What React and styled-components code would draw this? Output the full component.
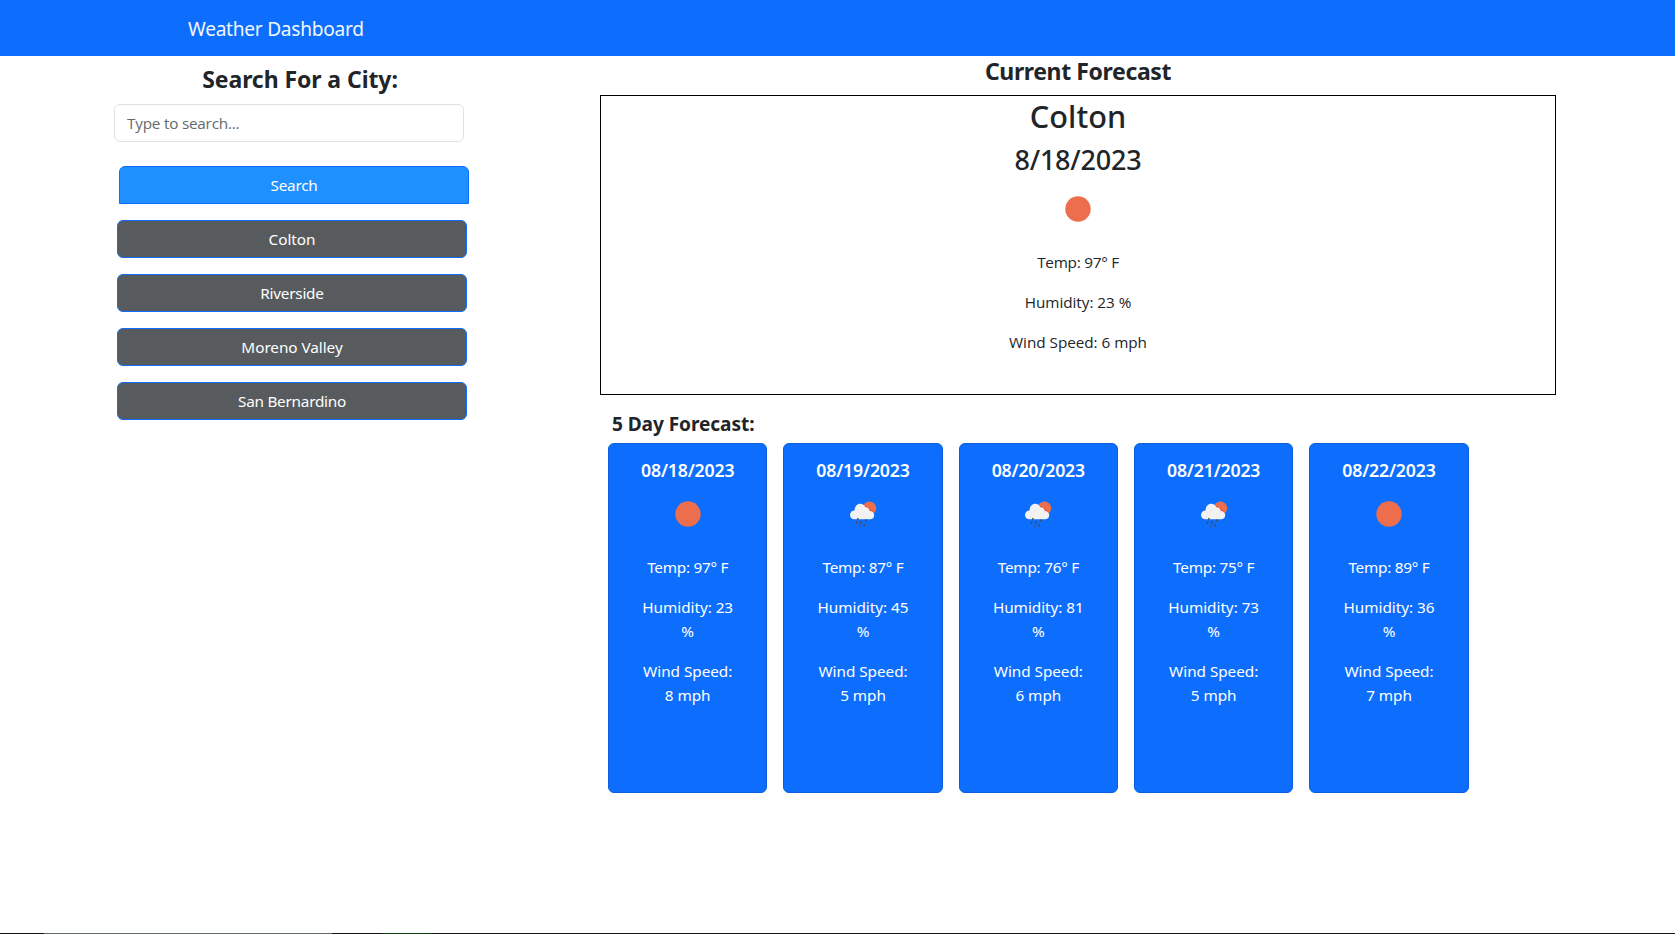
import React from "react";
import styled, { createGlobalStyle } from "styled-components";

const GlobalStyle = createGlobalStyle`
  *, *::before, *::after { box-sizing: border-box; }
  body {
    margin: 0;
    overflow: hidden;
    background: #fff;
    color: #212529;
    font-family: "Segoe UI", "Noto Sans", "Liberation Sans", sans-serif;
    font-size: 15.3px;
    line-height: 24px;
  }
  h1, h2, h3, h4, h5, p { margin: 0; }
`;

const Page = styled.div`
  display: flex;
  flex-direction: column;
  height: 934px;
`;

const Navbar = styled.header`
  display: flex;
  align-items: center;
  flex: 0 0 56px;
  padding: 1px 0 0 188px;
  background: #0d6efd;
`;

const Brand = styled.span`
  color: #fff;
  font-size: 19.1px;
  letter-spacing: -0.25px;
  opacity: 0.95;
`;

const Main = styled.main`
  display: flex;
  flex: 1;
  min-height: 0;
`;

const Sidebar = styled.aside`
  display: flex;
  flex-direction: column;
  flex: 0 0 600px;
  padding: 9px 0 0 114px;
`;

const SectionTitle = styled.h3`
  font-size: 23px;
  font-weight: 700;
  line-height: 28px;
  text-align: center;
  letter-spacing: ${(p) => (p.$tight ? "-0.38px" : "-0.08px")};
`;

const SearchTitle = styled(SectionTitle)`
  width: 372px;
  margin-bottom: 11px;
`;

const SearchInput = styled.input`
  width: 350px;
  height: 38px;
  padding: 6px 12px;
  border: 1px solid #dee2e6;
  border-radius: 6px;
  background: #fff;
  color: #212529;
  font: 400 15.3px "Open Sans", sans-serif;
  letter-spacing: -0.22px;
  &::placeholder { color: #64696e; opacity: 1; }
`;

const Button = styled.button`
  width: 350px;
  height: 38px;
  padding: 0;
  border: 1px solid #0d6efd;
  color: #fff;
  font: inherit;
  letter-spacing: ${(p) => (p.$loose ? "-0.05px" : "-0.24px")};
`;

const SearchButton = styled(Button)`
  margin: 24px 0 16px 5px;
  border-radius: 6px 6px 0 0;
  background: #1e90ff;
`;

const CityList = styled.div`
  display: flex;
  flex-direction: column;
  gap: 16px;
  margin-left: 3px;
`;

const CityButton = styled(Button)`
  border-radius: 6px;
  background: #575b5e;
`;

const Forecast = styled.section`
  width: 956px;
  padding-top: 1px;
`;

const Reading = styled.p`
  margin-top: 16px;
  letter-spacing: ${(p) => (p.$tight ? "-0.25px" : "-0.04px")};
`;

const CurrentBox = styled.div`
  display: flex;
  flex-direction: column;
  align-items: center;
  height: 300px;
  margin-top: 10px;
  padding-top: 1px;
  border: 1px solid #000;

  ${Reading} { font-family: "Open Sans", sans-serif; }
`;

const City = styled.h2`
  margin-bottom: 8px;
  font-size: 30.7px;
  font-weight: 500;
  line-height: 38.4px;
  letter-spacing: 0.05px;
`;

const Today = styled.h3`
  margin-bottom: 7px;
  font-size: 27px;
  font-weight: 500;
  line-height: 33.6px;
  letter-spacing: -0.2px;
`;

const FiveDayTitle = styled.h4`
  margin: 17px 0 7px 12px;
  font-size: 19.1px;
  font-weight: 700;
  line-height: 24px;
  letter-spacing: -0.08px;
`;

const Cards = styled.div`
  display: grid;
  grid-template-columns: repeat(5, 159.33px);
  gap: 16px;
  margin-left: 8px;
`;

const Card = styled.article`
  display: flex;
  flex-direction: column;
  align-items: center;
  height: 350px;
  padding: 16px 30px;
  border: 1px solid #0b5fdc;
  border-radius: 6px;
  background: #0d6efd;
  color: #fff;
  text-align: center;
`;

const CardDate = styled.h5`
  margin-bottom: 9px;
  font-size: 17.7px;
  font-weight: 600;
  line-height: 20px;
  letter-spacing: -0.17px;
  white-space: nowrap;
`;

const Icon = styled.svg`
  display: block;
  flex: none;
  width: 50px;
  height: 50px;
`;

const BottomEdge = styled.footer`
  flex: 0 0 1px;
  background: linear-gradient(
    to right,
    #10150f 44px, #5e6c62 44px, #5e6c62 332px,
    #10150f 332px, #10150f 383px, #0e4016 383px,
    #0e4016 431px, #131a13 431px
  );
`;

const Sun = () => (
  <Icon viewBox="0 0 50 50">
    <circle cx="25" cy="25" r="12.7" fill="#ec6e4c" />
  </Icon>
);

const SunShower = () => (
  <Icon viewBox="0 0 50 50">
    <circle cx="31.5" cy="19.2" r="6.7" fill="#ec6e4c" />
    <path
      d="M25.8 17.6 L28 17.4 L29.2 18.8 L31.4 19 L32.5 21.3 L34.8 22.3 L34.7 25 L26 25 Z"
      fill="#d94a26"
    />
    <path
      d="M16.4 30.3 C13.8 30.3 12 28.4 12 26 C12 23.5 14 21.6 16.6 21.6 C16.5 17.7 18.9 14.8 22.2 14.8 C24.7 14.8 26.5 16.2 27.2 18.3 C29.7 18 31.5 19.7 31.7 22 C34.4 22 36.2 23.8 36.2 26.2 C36.2 28.7 34.3 30.3 32 30.3 Z"
      fill="#f2f2f2"
    />
    <g stroke="#484b5b" strokeWidth="1.5" strokeLinecap="round">
      <path d="M20 29.6 l-.3 .8" />
      <path d="M27.9 31 l-.3 1.1" />
      <path d="M18.7 33.3 l-.5 1.2" />
      <path d="M23.1 32.6 l-.6 1.7" />
      <path d="M22 37.1 l-.2 .4" />
      <path d="M26.4 35.7 l-.5 1.3" />
    </g>
  </Icon>
);

const cities = [
  { name: "Colton", loose: true },
  { name: "Riverside" },
  { name: "Moreno Valley", loose: true },
  { name: "San Bernardino" },
];

const days = [
  { date: "08/18/2023", icon: Sun, temp: 97, humidity: 23, wind: 8 },
  { date: "08/19/2023", icon: SunShower, temp: 87, humidity: 45, wind: 5 },
  { date: "08/20/2023", icon: SunShower, temp: 76, humidity: 81, wind: 6 },
  { date: "08/21/2023", icon: SunShower, temp: 75, humidity: 73, wind: 5 },
  { date: "08/22/2023", icon: Sun, temp: 89, humidity: 36, wind: 7 },
];

const Readings = ({ temp, humidity, wind }) => (
  <>
    <Reading $tight>{`Temp: ${temp}° F`}</Reading>
    <Reading>{`Humidity: ${humidity} %`}</Reading>
    <Reading>{`Wind Speed: ${wind} mph`}</Reading>
  </>
);

export default function App() {
  return (
    <Page>
      <GlobalStyle />
      <Navbar>
        <Brand>Weather Dashboard</Brand>
      </Navbar>
      <Main>
        <Sidebar>
          <SearchTitle>Search For a City:</SearchTitle>
          <SearchInput type="text" placeholder="Type to search..." />
          <SearchButton>Search</SearchButton>
          <CityList>
            {cities.map(({ name, loose }) => (
              <CityButton key={name} $loose={loose}>{name}</CityButton>
            ))}
          </CityList>
        </Sidebar>
        <Forecast>
          <SectionTitle $tight>Current Forecast</SectionTitle>
          <CurrentBox>
            <City>Colton</City>
            <Today>8/18/2023</Today>
            <Sun />
            <Readings temp={97} humidity={23} wind={6} />
          </CurrentBox>
          <FiveDayTitle>5 Day Forecast:</FiveDayTitle>
          <Cards>
            {days.map(({ date, icon: DayIcon, ...readings }) => (
              <Card key={date}>
                <CardDate>{date}</CardDate>
                <DayIcon />
                <Readings {...readings} />
              </Card>
            ))}
          </Cards>
        </Forecast>
      </Main>
      <BottomEdge />
    </Page>
  );
}
